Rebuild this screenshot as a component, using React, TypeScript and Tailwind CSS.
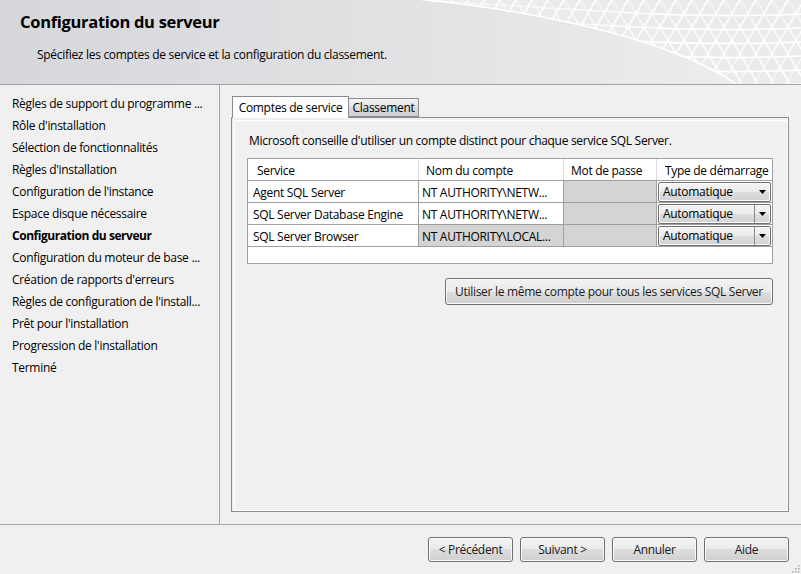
const navItems = [
  "Règles de support du programme ...",
  "Rôle d'installation",
  "Sélection de fonctionnalités",
  "Règles d'installation",
  "Configuration de l'instance",
  "Espace disque nécessaire",
  "Configuration du serveur",
  "Configuration du moteur de base ...",
  "Création de rapports d'erreurs",
  "Règles de configuration de l'install...",
  "Prêt pour l'installation",
  "Progression de l'installation",
  "Terminé",
];

const services = [
  { name: "Agent SQL Server", account: "NT AUTHORITY\\NETW...", locked: false, split: false },
  { name: "SQL Server Database Engine", account: "NT AUTHORITY\\NETW...", locked: false, split: true },
  { name: "SQL Server Browser", account: "NT AUTHORITY\\LOCAL...", locked: true, split: true },
];

const btn =
  "h-[25px] rounded-[3px] border border-[#707070] bg-[linear-gradient(#f2f2f2,#ebebeb_50%,#dddddd_50%,#cfcfcf)] shadow-[inset_0_0_0_1px_#fbfbfb] text-[12px] tracking-[-0.3px] text-[#1a1a1a] flex items-center justify-center";

function HeaderArt() {
  return (
    <svg className="absolute inset-0" width="801" height="84" viewBox="0 0 801 84">
      <defs>
        <linearGradient id="hbg" x1="0" x2="1" y1="0" y2="0">
          <stop offset="0" stopColor="#d6d7db" />
          <stop offset="0.55" stopColor="#e3e3e5" />
          <stop offset="1" stopColor="#efefef" />
        </linearGradient>
        <clipPath id="mesh">
          <path d="M420 0 C 540 12, 670 40, 735 84 L 801 84 L 801 0 Z" />
        </clipPath>
        <linearGradient id="fade" x1="0" x2="1" y1="0" y2="0">
          <stop offset="0" stopColor="#fff" stopOpacity="0.3" />
          <stop offset="0.5" stopColor="#fff" stopOpacity="0.9" />
          <stop offset="1" stopColor="#fff" stopOpacity="1" />
        </linearGradient>
      </defs>
      <rect width="801" height="84" fill="url(#hbg)" />
      <g clipPath="url(#mesh)">
        <rect x="420" width="381" height="84" fill="#ebebeb" />
        <g stroke="url(#fade)" strokeWidth="1.6" fill="none">
          {Array.from({ length: 30 }).map((_, i) => (
            <line key={"a" + i} x1={420 + i * 16} y1={0} x2={420 + i * 16 + 50} y2={84} />
          ))}
          {Array.from({ length: 30 }).map((_, i) => (
            <line key={"b" + i} x1={420 + i * 16} y1={0} x2={420 + i * 16 - 50} y2={84} />
          ))}
          {Array.from({ length: 7 }).map((_, i) => (
            <path key={"c" + i} d={`M420 ${i * 14} C 560 ${i * 14 + 8}, 680 ${i * 14 + 20}, 801 ${i * 14 + 14}`} />
          ))}
        </g>
        <path d="M420 0 C 540 12, 670 40, 735 84" stroke="#fff" strokeWidth="3" fill="none" />
      </g>
    </svg>
  );
}

function Combo({ split }: { split: boolean }) {
  return (
    <div className="mx-[1px] h-[20px] flex-1 flex items-center rounded-[2px] border border-[#707070] bg-[linear-gradient(#f4f4f4,#ebebeb_50%,#dddddd_50%,#d2d2d2)] shadow-[inset_0_0_0_1px_#fbfbfb]">
      <span className="flex-1 pl-[4px] pt-[1px] text-[12px] tracking-[-0.3px] text-black">Automatique</span>
      <span
        className={
          "w-[16px] h-full flex items-center justify-center " +
          (split ? "border-l border-[#8a8a8a]" : "")
        }
      >
        <svg width="7" height="4" viewBox="0 0 7 4">
          <path d="M0 0 H7 L3.5 4 Z" fill="#000" />
        </svg>
      </span>
    </div>
  );
}

export default function App() {
  return (
    <div className="w-[801px] h-[574px] bg-[#f0f0f0] flex flex-col font-['Segoe_UI','Open_Sans',sans-serif] text-black overflow-hidden relative">
      <header className="relative h-[85px] border-b border-[#a3a3aa] shrink-0">
        <HeaderArt />
        <div className="relative pl-[20px] pt-[10px]">
          <h1 className="text-[16.5px] font-bold leading-[24px] tracking-[-0.3px]">Configuration du serveur</h1>
          <p className="pl-[17px] pt-[11px] text-[12px] leading-[20px] tracking-[-0.3px]">
            Spécifiez les comptes de service et la configuration du classement.
          </p>
        </div>
      </header>

      <div className="flex-1 flex min-h-0">
        <nav className="w-[220px] border-r border-[#a6a6a6] pt-[8px] pl-[12px] shrink-0">
          {navItems.map((item) => (
            <div
              key={item}
              className={
                "h-[22px] leading-[22px] text-[12px] tracking-[-0.3px] whitespace-nowrap " +
                (item === "Configuration du serveur" ? "font-bold tracking-[-0.45px]" : "")
              }
            >
              {item}
            </div>
          ))}
        </nav>

        <section className="flex-1 pl-[11px] pr-[12px] pt-[11px] pb-[12px] flex flex-col">
          <div className="flex items-end h-[21px] pl-[1px]">
            <div className="relative z-10 -mb-px h-[22px] w-[117px] border border-b-0 border-[#898c95] bg-[#fdfdfd] text-[12px] tracking-[-0.3px] flex items-center justify-center">
              Comptes de service
            </div>
            <div className="h-[19px] w-[70px] border border-l-0 border-[#898c95] bg-[linear-gradient(#f2f2f2,#e3e3e3_50%,#d9d9d9_50%,#d0d0d0)] text-[12px] tracking-[-0.3px] flex items-center justify-center">
              Classement
            </div>
          </div>
          <div className="flex-1 border border-[#898c95] shadow-[inset_2px_2px_0_#f0f0f0,inset_-1px_-1px_0_#fff,inset_3px_3px_0_#fff] px-[15px] pt-[14px] flex flex-col">
            <p className="pl-[2px] text-[12px] tracking-[-0.3px] leading-[18px]">
              Microsoft conseille d'utiliser un compte distinct pour chaque service SQL Server.
            </p>
            <div className="mt-[8px] border border-[#a0a0a0] bg-white h-[106px] text-[12px] tracking-[-0.3px]">
              <div className="flex h-[22px] border-b border-[#a0a0a0]">
                <div className="w-[171px] border-r border-[#dadada] pl-[9px] pt-[1px] leading-[21px]">Service</div>
                <div className="w-[145px] border-r border-[#dadada] pl-[7px] pt-[1px] leading-[21px]">Nom du compte</div>
                <div className="w-[93px] border-r border-[#dadada] pl-[7px] pt-[1px] leading-[21px]">Mot de passe</div>
                <div className="flex-1 pl-[8px] pt-[1px] leading-[21px]">Type de démarrage</div>
              </div>
              {services.map((s) => (
                <div key={s.name} className="flex h-[22px] border-b border-[#a0a0a0]">
                  <div className="w-[171px] border-r border-[#a0a0a0] pl-[5px] pt-[1px] leading-[21px]">{s.name}</div>
                  <div
                    className={
                      "w-[145px] border-r border-[#a0a0a0] pl-[3px] pt-[1px] leading-[21px] " +
                      (s.locked ? "bg-[#d4d4d4]" : "bg-white")
                    }
                  >
                    {s.account}
                  </div>
                  <div className="w-[93px] border-r border-[#a0a0a0] bg-[#d4d4d4]" />
                  <div className="flex-1 flex items-center">
                    <Combo split={s.split} />
                  </div>
                </div>
              ))}
            </div>
            <div className="flex justify-end mt-[14px]">
              <button className={btn + " w-[328px] h-[27px]"}>
                Utiliser le même compte pour tous les services SQL Server
              </button>
            </div>
          </div>
        </section>
      </div>

      <footer className="h-[50px] border-t border-[#a6a6a6] shrink-0 flex justify-end items-start pt-[12px] pr-[12px] gap-[7px]">
        <button className={btn + " w-[85px]"}>&lt; Précédent</button>
        <button className={btn + " w-[85px]"}>Suivant &gt;</button>
        <button className={btn + " w-[85px]"}>Annuler</button>
        <button className={btn + " w-[85px]"}>Aide</button>
      </footer>

      <svg className="absolute right-[1px] bottom-[1px]" width="10" height="10" viewBox="0 0 10 10">
        {[[8, 2], [8, 5], [5, 5], [8, 8], [5, 8], [2, 8]].map(([x, y]) => (
          <rect key={x + "-" + y} x={x} y={y} width="1.5" height="1.5" fill="#a8a8a8" />
        ))}
      </svg>
    </div>
  );
}
